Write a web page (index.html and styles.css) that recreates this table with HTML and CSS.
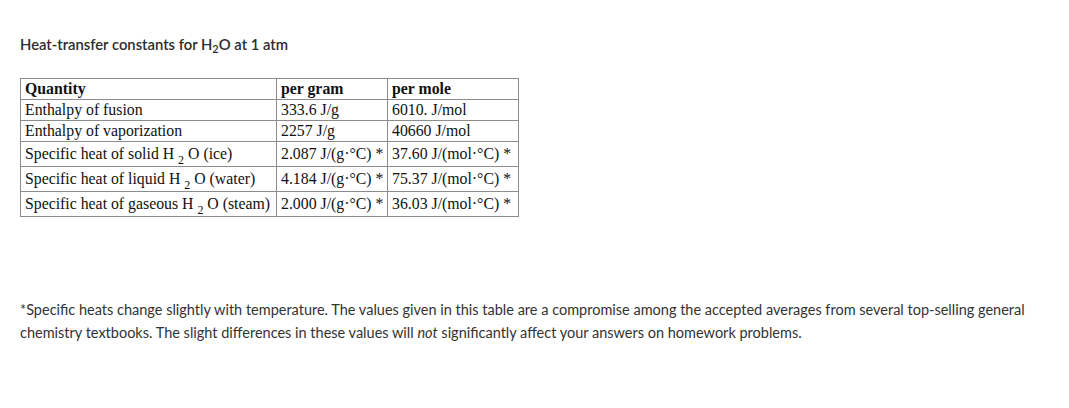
FILE: index.html
```html
<!DOCTYPE html>
<html>
<head>
<meta charset="utf-8">
<link rel="stylesheet" href="styles.css">
</head>
<body>
<div class="page">
  <h3 class="title">Heat-transfer constants for H<sub>2</sub>O at 1 atm</h3>
  <table class="data">
    <colgroup><col class="c1"><col class="c2"><col class="c3"></colgroup>
    <tr class="head"><th>Quantity</th><th>per gram</th><th>per mole</th></tr>
    <tr><td>Enthalpy of fusion</td><td>333.6 J/g</td><td>6010. J/mol</td></tr>
    <tr><td>Enthalpy of vaporization</td><td>2257 J/g</td><td>40660 J/mol</td></tr>
    <tr class="subrow"><td>Specific heat of solid H <sub>2</sub> O (ice)</td><td>2.087 J/(g·°C) *</td><td>37.60 J/(mol·°C) *</td></tr>
    <tr class="subrow"><td>Specific heat of liquid H <sub>2</sub> O (water)</td><td>4.184 J/(g·°C) *</td><td>75.37 J/(mol·°C) *</td></tr>
    <tr class="subrow"><td>Specific heat of gaseous H <sub>2</sub> O (steam)</td><td>2.000 J/(g·°C) *</td><td>36.03 J/(mol·°C) *</td></tr>
  </table>
  <p class="note">*Specific heats change slightly with temperature. The values given in this table are a compromise among the accepted averages from several top-selling general chemistry textbooks. The slight differences in these values will <em>not</em> significantly affect your answers on homework problems.</p>
</div>
</body>
</html>
```
FILE: styles.css
```css
html, body {
  margin: 0;
  padding: 0;
  background: #fff;
}
.page {
  padding: 34px 20px 20px 20px;
  font-family: Lato, "Open Sans", sans-serif;
  color: #333;
}
.title {
  margin: 0;
  font-size: 14.8px;
  font-weight: 600;
  line-height: 20px;
  color: #2d2d2d;
}
.title sub {
  font-size: 11px;
  line-height: 0;
  vertical-align: -3px;
}
.data {
  margin-top: 24px;
  width: 498px;
  table-layout: fixed;
  border-collapse: collapse;
  font-family: "Liberation Serif", "Times New Roman", serif;
  font-size: 15.8px;
  color: #111;
}
.data .c1 { width: 256px; }
.data .c2 { width: 111px; }
.data .c3 { width: 131px; }
.data th, .data td {
  border: 1px solid #8c8c8c;
  padding: 0 2px 0 4px;
  height: 20px;
  line-height: 18px;
  text-align: left;
  white-space: nowrap;
  overflow: visible;
  vertical-align: middle;
}
.data th {
  font-weight: bold;
}
.data .subrow td {
  height: 24px;
}
.data sub {
  font-size: 12px;
  line-height: 0;
  vertical-align: -5px;
}
.note {
  margin: 81px 0 0 0;
  font-size: 14.5px;
  line-height: 23px;
  color: #333;
}
```
